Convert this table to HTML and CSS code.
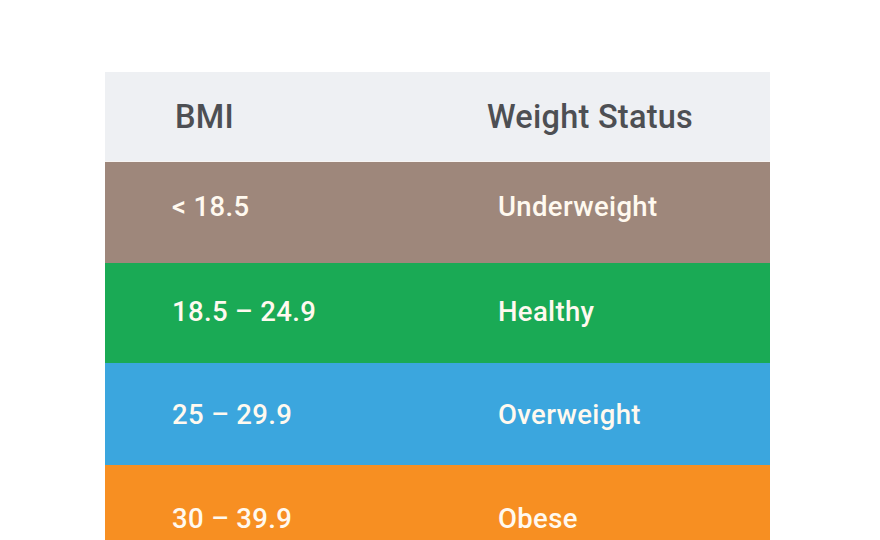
FILE: index.html
```html
<!DOCTYPE html>
<html>
<head>
<meta charset="utf-8">
<link rel="stylesheet" href="styles.css">
</head>
<body>
<div class="table">
  <div class="row head">
    <div class="cell c1">BMI</div>
    <div class="cell c2">Weight Status</div>
  </div>
  <div class="row under">
    <div class="cell c1">&lt; 18.5</div>
    <div class="cell c2">Underweight</div>
  </div>
  <div class="row healthy">
    <div class="cell c1">18.5 – 24.9</div>
    <div class="cell c2">Healthy</div>
  </div>
  <div class="row over">
    <div class="cell c1">25 – 29.9</div>
    <div class="cell c2">Overweight</div>
  </div>
  <div class="row obese">
    <div class="cell c1">30 – 39.9</div>
    <div class="cell c2">Obese</div>
  </div>
</div>
</body>
</html>
```
FILE: styles.css
```css
html, body {
  margin: 0;
  padding: 0;
  background: #ffffff;
  height: 540px;
  overflow: hidden;
}
body {
  font-family: Roboto, "Liberation Sans", sans-serif;
}
.table {
  margin: 72px 0 0 105px;
  width: 665px;
  display: flex;
  flex-direction: column;
}
.row {
  display: grid;
  grid-template-columns: 332px 333px;
  align-items: start;
  box-sizing: border-box;
  color: #fff9ef;
  font-size: 27.5px;
  font-weight: 500;
  line-height: 28px;
  letter-spacing: 0.35px;
}
.row.head {
  height: 90px;
  align-items: center;
  background: #eef0f3;
  color: #4d4f53;
  font-size: 32.5px;
  line-height: 40px;
  letter-spacing: 0.25px;
  border-bottom: 1px solid #f7f4f2;
}
.under { background: #9e877b; height: 101px; padding-top: 31px; }
.healthy { background: #1aaa55; height: 100px; padding-top: 35px; }
.over { background: #3ba6de; height: 102px; padding-top: 38px; }
.obese { background: #f78f22; height: 75px; padding-top: 40px; }
.cell.c1 { padding-left: 67px; }
.cell.c2 { padding-left: 61px; }
.head .c1 { padding-left: 70px; }
.head .c2 { padding-left: 50px; }
```
